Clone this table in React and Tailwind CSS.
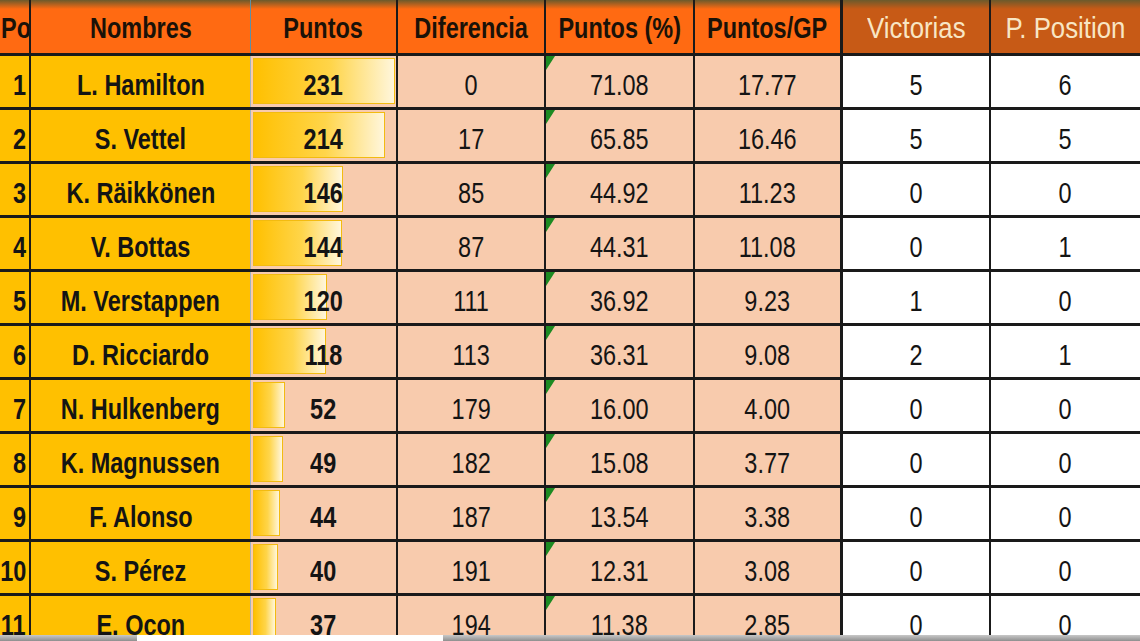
import React from 'react'

const rows = [
  [1, 'L. Hamilton', 231, 0, '71.08', '17.77', 5, 6],
  [2, 'S. Vettel', 214, 17, '65.85', '16.46', 5, 5],
  [3, 'K. Räikkönen', 146, 85, '44.92', '11.23', 0, 0],
  [4, 'V. Bottas', 144, 87, '44.31', '11.08', 0, 1],
  [5, 'M. Verstappen', 120, 111, '36.92', '9.23', 1, 0],
  [6, 'D. Ricciardo', 118, 113, '36.31', '9.08', 2, 1],
  [7, 'N. Hulkenberg', 52, 179, '16.00', '4.00', 0, 0],
  [8, 'K. Magnussen', 49, 182, '15.08', '3.77', 0, 0],
  [9, 'F. Alonso', 44, 187, '13.54', '3.38', 0, 0],
  [10, 'S. Pérez', 40, 191, '12.31', '3.08', 0, 0],
  [11, 'E. Ocon', 37, 194, '11.38', '2.85', 0, 0],
]

const cols = "grid grid-cols-[31px_220px_147px_148px_149px_148px_148px_149px]"
const orangeHead = "bg-[linear-gradient(to_bottom,#6b5a2c_0px,#ff6a12_9px)]"
const brownHead = "bg-[linear-gradient(to_bottom,#6b5a2c_0px,#c75a16_9px)]"

// the sheet text is narrow and tall, so squeeze it horizontally
const T = ({ children, origin = '', wide }) => (
  <span className={`inline-block whitespace-nowrap ${wide ? 'scale-x-[0.89]' : 'scale-x-[0.81]'} ${origin}`}>{children}</span>
)

const Head = ({ children, className = '' }) => (
  <div className={`flex items-center justify-center pt-[4px] overflow-hidden font-bold text-[#1a1208] ${orangeHead} ${className}`}>
    {children}
  </div>
)

const Tick = () => (
  <svg className="absolute left-0 top-0" width="9" height="14" viewBox="0 0 9 14">
    <polygon points="0,0 9,0 0,14" fill="#1c8a22" />
  </svg>
)

const cell = "flex items-center justify-center pt-[8px]"

export default function App() {
  return (
    <div className="relative w-[1140px] h-[641px] overflow-hidden bg-white text-[29px] leading-none text-[#141414] font-['Liberation_Sans',Arial,sans-serif]">
      <div className={`${cols} h-[56px] border-b-[3px] border-[#1a1a1a]`}>
        <Head className="justify-start pl-[1px] border-r-2 border-[#1a1a1a]"><T origin="origin-left">Pos</T></Head>
        <Head className="border-r border-[#5d8fa5]"><T>Nombres</T></Head>
        <Head className="border-r-2 border-[#1a1a1a]"><T>Puntos</T></Head>
        <Head className="border-r-2 border-[#1a1a1a]"><T>Diferencia</T></Head>
        <Head className="border-r-2 border-[#1a1a1a]"><T>Puntos (%)</T></Head>
        <Head className="border-r-[3px] border-[#1a1a1a]"><T>Puntos/GP</T></Head>
        <div className={`flex items-center justify-center pt-[4px] text-[#f8e6c4] border-r-2 border-[#1a1a1a] ${brownHead}`}><T wide>Victorias</T></div>
        <div className={`flex items-center justify-center pt-[4px] text-[#f8e6c4] ${brownHead}`}><T wide>P. Position</T></div>
      </div>

      {rows.map(([pos, name, pts, diff, pct, gp, wins, poles]) => (
        <div key={pos} className={`${cols} h-[54px] border-b-[3px] border-[#1a1a1a]`}>
          <div className="flex items-center justify-end pt-[8px] pr-[3px] overflow-hidden font-bold bg-[#ffc000] border-r-2 border-[#1a1a1a]">
            <T origin="origin-right">{pos}</T>
          </div>
          <div className={`${cell} font-bold bg-[#ffc000] border-r border-[#9fb4c0]`}><T>{name}</T></div>
          <div className={`relative ${cell} font-bold bg-[#f8cbad] border-r-2 border-[#1a1a1a]`}>
            <div
              className="absolute left-[2px] top-[2px] bottom-[3px] border border-[#f2bb10] bg-[linear-gradient(to_right,#ffc000,#ffd54a_55%,#fff6dc)]"
              style={{ width: `${Math.round((142 * pts) / 231)}px` }}
            />
            <span className="relative"><T>{pts}</T></span>
          </div>
          <div className={`${cell} bg-[#f8cbad] border-r-2 border-[#1a1a1a]`}><T>{diff}</T></div>
          <div className={`relative ${cell} bg-[#f8cbad] border-r-2 border-[#1a1a1a]`}>
            <Tick />
            <T>{pct}</T>
          </div>
          <div className={`${cell} bg-[#f8cbad] border-r-[3px] border-[#1a1a1a]`}><T>{gp}</T></div>
          <div className={`${cell} bg-white border-r-2 border-[#1a1a1a]`}><T>{wins}</T></div>
          <div className={`${cell} bg-white`}><T>{poles}</T></div>
        </div>
      ))}

      <div className="absolute bottom-0 left-0 flex h-[6px] w-full">
        <div className="w-[137px] bg-[linear-gradient(to_bottom,#c8c8c8,#8f8f8f)]" />
        <div className="w-[306px] bg-white" />
        <div className="flex-1 bg-[linear-gradient(to_bottom,#c8c8c8,#8f8f8f)]" />
      </div>
    </div>
  )
}
